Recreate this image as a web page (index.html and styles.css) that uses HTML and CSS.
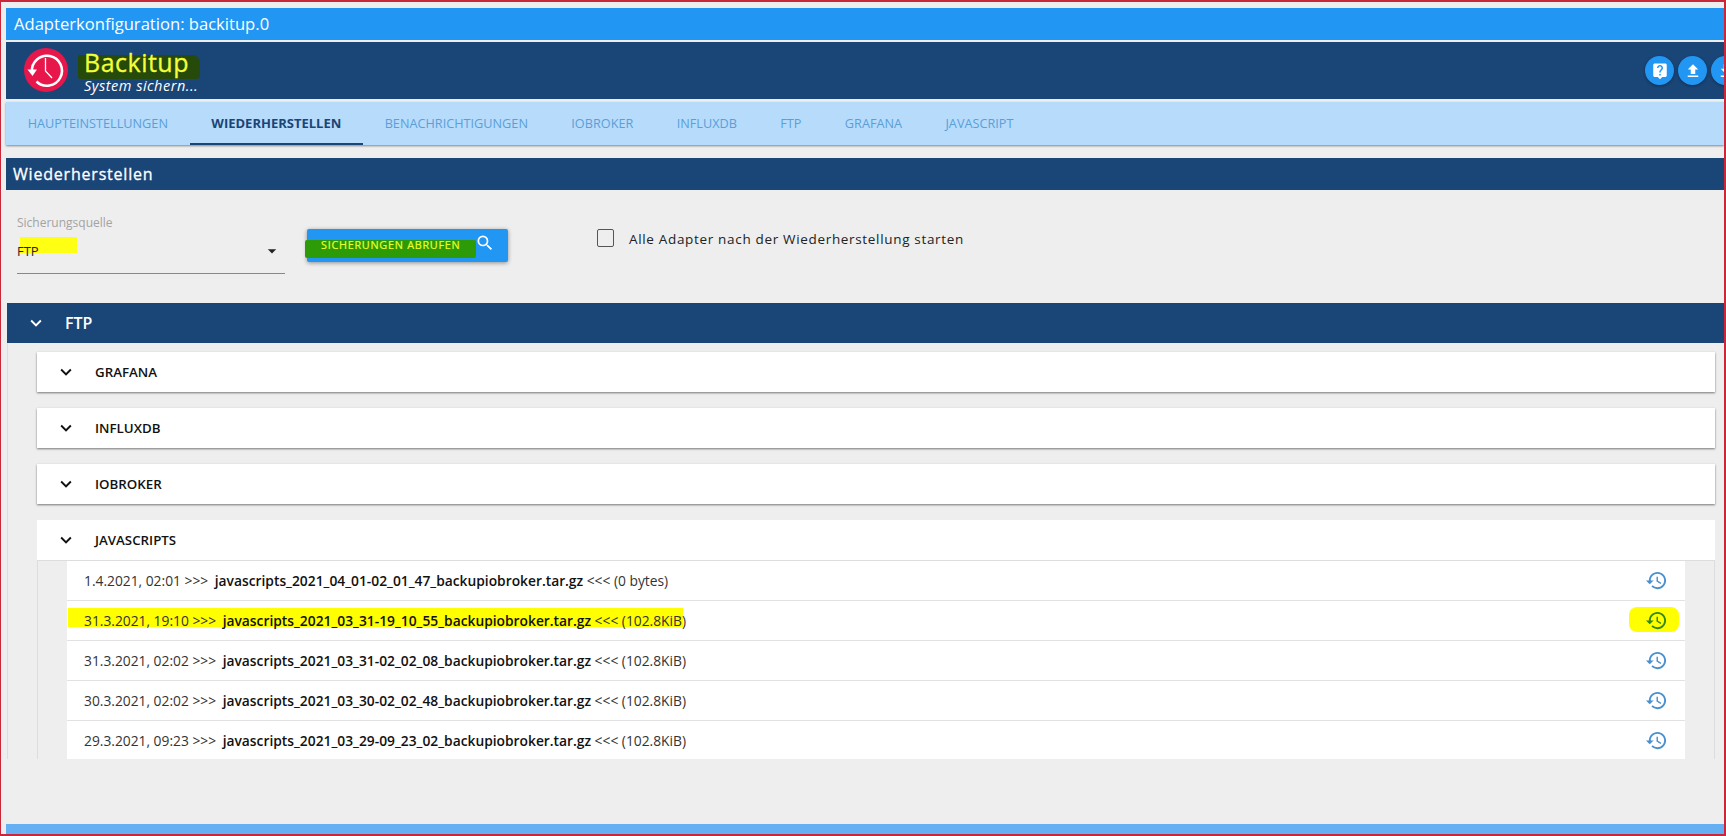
FILE: index.html
```html
<!DOCTYPE html>
<html lang="de">
<head>
<meta charset="utf-8">
<title>Adapterkonfiguration: backitup.0</title>
<link rel="stylesheet" href="styles.css">
</head>
<body>
<div class="frame">
  <div class="title-bar">Adapterkonfiguration: backitup.0</div>
  <header class="app-head">
    <svg class="logo" viewBox="0 0 44 44">
      <circle cx="22" cy="22" r="22" fill="#e8174b"/>
      <path d="M8 24A15 15 0 1 1 12.500 33.500" fill="none" stroke="#fff" stroke-width="2.600"/>
      <path d="M3.500 21.500h9.500L8.500 28z" fill="#fff"/>
      <path d="M21.500 10v13l6.500 7" fill="none" stroke="#fff" stroke-width="1.300"/>
    </svg>
    <div class="brand">
      <span class="mark mark-brand"></span>
      <div class="brand-name">Backitup</div>
      <div class="brand-sub">System sichern...</div>
    </div>
    <div class="head-actions">
      <span class="round-btn"><svg viewBox="0 0 24 24"><path d="M19 2H5c-1.110 0-2 .9-2 2v14c0 1.100.89 2 2 2h4l3 3 3-3h4c1.100 0 2-.9 2-2V4c0-1.100-.9-2-2-2zm-6 16h-2v-2h2v2zm2.070-7.750l-.9.92C13.450 11.900 13 12.500 13 14h-2v-.5c0-1.100.45-2.100 1.170-2.830l1.240-1.260c.37-.36.59-.86.59-1.410 0-1.100-.9-2-2-2s-2 .9-2 2H8c0-2.210 1.790-4 4-4s4 1.790 4 4c0 .88-.36 1.680-.93 2.250z"/></svg></span>
      <span class="round-btn"><svg viewBox="0 0 24 24"><path d="M9 16h6v-6h4l-7-7-7 7h4zm-4 2h14v2H5z"/></svg></span>
      <span class="round-btn"><svg viewBox="0 0 24 24"><path d="M19 9h-4V3H9v6H5l7 7 7-7zM5 18v2h14v-2H5z"/></svg></span>
    </div>
  </header>
  <nav class="tabs">
    <a class="tab">Haupteinstellungen</a>
    <a class="tab tab-active">Wiederherstellen</a>
    <a class="tab">Benachrichtigungen</a>
    <a class="tab">ioBroker</a>
    <a class="tab">InfluxDB</a>
    <a class="tab">FTP</a>
    <a class="tab">Grafana</a>
    <a class="tab">Javascript</a>
  </nav>
  <h2 class="section-bar">Wiederherstellen</h2>
  <div class="controls">
    <div class="select">
      <span class="mark mark-select"></span>
      <label class="select-label">Sicherungsquelle</label>
      <div class="select-value">FTP
        <svg class="caret" viewBox="0 0 24 24"><path d="M7 10l5 5 5-5z"/></svg>
      </div>
    </div>
    <button class="fetch-btn">
      <span class="mark mark-btn"></span>
      <span class="fetch-label">Sicherungen abrufen</span>
      <svg class="fetch-icon" viewBox="0 0 24 24"><path d="M15.500 14h-.79l-.28-.27A6.471 6.471 0 0 0 16 9.500 6.500 6.500 0 1 0 9.500 16c1.610 0 3.090-.59 4.230-1.570l.27.28v.79l5 4.990L20.490 19l-4.990-5zm-6 0C7.010 14 5 11.990 5 9.500S7.010 5 9.500 5 14 7.010 14 9.500 11.990 14 9.500 14z"/></svg>
    </button>
    <label class="check">
      <span class="check-box"></span>
      <span>Alle Adapter nach der Wiederherstellung starten</span>
    </label>
  </div>
  <section class="ftp">
    <div class="ftp-head">
      <svg class="chev" viewBox="0 0 24 24"><path d="M16.590 8.590L12 13.170 7.410 8.590 6 10l6 6 6-6z"/></svg>
      <span>FTP</span>
    </div>
    <div class="ftp-body">
      <div class="card"><div class="card-head"><svg class="chev" viewBox="0 0 24 24"><path d="M16.590 8.590L12 13.170 7.410 8.590 6 10l6 6 6-6z"/></svg><span>GRAFANA</span></div></div>
      <div class="card"><div class="card-head"><svg class="chev" viewBox="0 0 24 24"><path d="M16.590 8.590L12 13.170 7.410 8.590 6 10l6 6 6-6z"/></svg><span>INFLUXDB</span></div></div>
      <div class="card"><div class="card-head"><svg class="chev" viewBox="0 0 24 24"><path d="M16.590 8.590L12 13.170 7.410 8.590 6 10l6 6 6-6z"/></svg><span>IOBROKER</span></div></div>
      <div class="card card-open">
        <div class="card-head"><svg class="chev" viewBox="0 0 24 24"><path d="M16.590 8.590L12 13.170 7.410 8.590 6 10l6 6 6-6z"/></svg><span>JAVASCRIPTS</span></div>
        <ul class="files">
          <li class="file"><span>1.4.2021, 02:01 &gt;&gt;&gt; <b>javascripts_2021_04_01-02_01_47_backupiobroker.tar.gz</b> &lt;&lt;&lt; (0 bytes)</span>
            <svg class="restore" viewBox="0 0 24 24"><path d="M13 3c-4.970 0-9 4.030-9 9H1l3.890 3.890.07.14L9 12H6c0-3.870 3.130-7 7-7s7 3.130 7 7-3.130 7-7 7c-1.930 0-3.680-.79-4.940-2.060l-1.420 1.420C8.270 19.990 10.510 21 13 21c4.970 0 9-4.030 9-9s-4.030-9-9-9zm-1 5v5l4.280 2.540.72-1.210-3.500-2.080V8H12z"/></svg></li>
          <li class="file file-marked"><span class="mark mark-row"></span><span class="mark mark-icon"></span><span class="file-text">31.3.2021, 19:10 &gt;&gt;&gt; <b>javascripts_2021_03_31-19_10_55_backupiobroker.tar.gz</b> &lt;&lt;&lt; (102.8KiB)</span>
            <svg class="restore" viewBox="0 0 24 24"><path d="M13 3c-4.970 0-9 4.030-9 9H1l3.890 3.890.07.14L9 12H6c0-3.870 3.130-7 7-7s7 3.130 7 7-3.130 7-7 7c-1.930 0-3.680-.79-4.940-2.060l-1.420 1.420C8.270 19.990 10.510 21 13 21c4.970 0 9-4.030 9-9s-4.030-9-9-9zm-1 5v5l4.280 2.540.72-1.210-3.500-2.080V8H12z"/></svg></li>
          <li class="file"><span>31.3.2021, 02:02 &gt;&gt;&gt; <b>javascripts_2021_03_31-02_02_08_backupiobroker.tar.gz</b> &lt;&lt;&lt; (102.8KiB)</span>
            <svg class="restore" viewBox="0 0 24 24"><path d="M13 3c-4.970 0-9 4.030-9 9H1l3.890 3.890.07.14L9 12H6c0-3.870 3.130-7 7-7s7 3.130 7 7-3.130 7-7 7c-1.930 0-3.680-.79-4.940-2.060l-1.420 1.420C8.270 19.990 10.510 21 13 21c4.970 0 9-4.030 9-9s-4.030-9-9-9zm-1 5v5l4.280 2.540.72-1.210-3.500-2.080V8H12z"/></svg></li>
          <li class="file"><span>30.3.2021, 02:02 &gt;&gt;&gt; <b>javascripts_2021_03_30-02_02_48_backupiobroker.tar.gz</b> &lt;&lt;&lt; (102.8KiB)</span>
            <svg class="restore" viewBox="0 0 24 24"><path d="M13 3c-4.970 0-9 4.030-9 9H1l3.890 3.890.07.14L9 12H6c0-3.870 3.130-7 7-7s7 3.130 7 7-3.130 7-7 7c-1.930 0-3.680-.79-4.940-2.060l-1.420 1.420C8.270 19.990 10.510 21 13 21c4.970 0 9-4.030 9-9s-4.030-9-9-9zm-1 5v5l4.280 2.540.72-1.210-3.500-2.080V8H12z"/></svg></li>
          <li class="file"><span>29.3.2021, 09:23 &gt;&gt;&gt; <b>javascripts_2021_03_29-09_23_02_backupiobroker.tar.gz</b> &lt;&lt;&lt; (102.8KiB)</span>
            <svg class="restore" viewBox="0 0 24 24"><path d="M13 3c-4.970 0-9 4.030-9 9H1l3.890 3.890.07.14L9 12H6c0-3.870 3.130-7 7-7s7 3.130 7 7-3.130 7-7 7c-1.930 0-3.680-.79-4.940-2.060l-1.420 1.420C8.270 19.990 10.510 21 13 21c4.970 0 9-4.030 9-9s-4.030-9-9-9zm-1 5v5l4.280 2.540.72-1.210-3.500-2.080V8H12z"/></svg></li>
        </ul>
      </div>
    </div>
  </section>
  <div class="foot-bar"></div>
</div>
</body>
</html>
```
FILE: styles.css
```css
* { box-sizing: border-box; }
html, body { margin: 0; height: 100%; overflow: hidden; }
body { font-family: "Open Sans", "Liberation Sans", sans-serif; color: #111; background: #eee; }

.frame {
  height: 836px;
  border: 2px solid #c8283a;
  border-width: 2px 2px 2px 1px;
  background: #eee;
  padding: 6px 0 0 5px;
  display: flex;
  flex-direction: column;
  overflow: hidden;
}

.title-bar {
  height: 32px;
  flex: none;
  background: #2196f3;
  color: #fff;
  font-size: 16.600px;
  line-height: 32px;
  padding-left: 8px;
}

.app-head {
  position: relative;
  flex: none;
  height: 57px;
  margin-top: 2px;
  background: #1a4577;
  display: flex;
  align-items: center;
  padding-left: 18px;
}
.logo { width: 44px; height: 44px; flex: none; margin-top: -1px; }
.brand { position: relative; margin: -2px 0 0 16px; padding-top: 1px; }
.brand-name {
  position: relative;
  font-size: 25px;
  line-height: 30px;
  letter-spacing: .5px;
  color: #f2ff3c;
  -webkit-text-stroke: .3px #f2ff3c;
}
.brand-sub {
  position: relative;
  font-size: 14.500px;
  line-height: 17px;
  font-style: italic;
  color: #fff;
  letter-spacing: .5px;
}
.head-actions {
  position: absolute;
  left: 1639px;
  top: 14px;
  display: flex;
  gap: 4px;
}
.round-btn {
  flex: none;
  width: 29px;
  height: 29px;
  border-radius: 50%;
  background: #2196f3;
  box-shadow: 0 1px 3px rgba(0,0,0,.35);
  display: flex;
  align-items: center;
  justify-content: center;
}
.round-btn svg { width: 18px; height: 18px; fill: #fff; }

.mark { position: absolute; display: block; }
.mark-brand { left: -6px; top: 9px; width: 122px; height: 24px; background: #254a0a; border-radius: 2px 8px 4px 2px; }
.mark-select { left: 3px; top: 47px; width: 57px; height: 16px; background: #ffff14; }
.mark-btn { left: -2px; top: 11px; width: 171px; height: 18px; background: #2d9a08; border-radius: 2px; }
.mark-row { left: 1px; top: 7px; width: 615px; height: 19px; background: #ffff00; }
.mark-icon { left: 1562px; top: 6px; width: 50px; height: 25px; background: #ffff00; border-radius: 8px; }

.tabs {
  flex: none;
  height: 43px;
  margin-top: 3px;
  background: #b7dbfb;
  box-shadow: 0 1px 2px rgba(0,0,0,.45);
  display: flex;
}
.tab {
  height: 43px;
  padding: 0 21.700px;
  font-size: 12.700px;
  line-height: 43px;
  text-transform: uppercase;
  color: #5a9fd8;
  white-space: nowrap;
}
.tab-active {
  color: #1a4577;
  font-size: 13px;
  font-weight: 700;
  border-bottom: 2px solid #1a4577;
}

.section-bar {
  flex: none;
  margin: 13px 0 0;
  height: 32px;
  background: #1a4577;
  color: #fff;
  font-size: 16px;
  font-weight: 400;
  line-height: 32px;
  letter-spacing: .8px;
  padding-left: 7px;
  -webkit-text-stroke: .3px #fff;
}

.controls {
  flex: none;
  height: 113px;
  display: flex;
  align-items: flex-start;
  padding-left: 11px;
}
.select {
  position: relative;
  width: 268px;
  height: 84px;
  padding-top: 24px;
  border-bottom: 1px solid #888;
  flex: none;
}
.select-label { position: relative; display: block; font-size: 12px; line-height: 18px; color: #a3a3a3; }
.select-value { position: relative; margin-top: 10px; font-size: 13px; line-height: 18px; color: #222; }
.caret { position: absolute; right: 3px; top: -1px; width: 20px; height: 20px; fill: #222; }

.fetch-btn {
  position: relative;
  flex: none;
  margin: 39px 0 0 22px;
  width: 201px;
  height: 33px;
  border: 0;
  border-radius: 2px;
  background: #2196f3;
  box-shadow: 0 1px 4px rgba(0,0,0,.4);
  padding: 0 0 0 14px;
  display: flex;
  align-items: center;
  font-family: inherit;
}
.fetch-label {
  position: relative;
  font-size: 10.800px;
  line-height: 14px;
  letter-spacing: .75px;
  text-transform: uppercase;
  color: #eaff2a;
  -webkit-text-stroke: .2px #eaff2a;
  white-space: nowrap;
  margin-top: -2px;
}
.fetch-icon { position: absolute; left: 168px; top: 4px; width: 20px; height: 20px; fill: #fff; }

.check {
  flex: none;
  display: flex;
  align-items: center;
  gap: 15px;
  margin: 40px 0 0 89px;
  height: 18px;
  font-size: 13.500px;
  letter-spacing: .67px;
  color: #222;
}
.check-box {
  width: 17px;
  height: 18px;
  border: 1px solid #555;
  border-radius: 2px;
  flex: none;
  margin-top: -2px;
}

.ftp { flex: 1; min-height: 0; display: flex; flex-direction: column; }
.ftp-head {
  flex: none;
  height: 40px;
  margin-left: 1px;
  background: #1a4577;
  color: #fff;
  font-size: 16px;
  font-weight: 600;
  display: flex;
  align-items: center;
  gap: 18px;
  padding-left: 18px;
}
.ftp-head .chev { fill: #fff; }
.chev { width: 22px; height: 22px; flex: none; fill: #111; }
.ftp-body { padding: 9px 9px 0 29px; border-left: 1px solid #ddd; margin-left: 1px; }
.card {
  background: #fff;
  box-shadow: 0 1px 2px rgba(0,0,0,.5);
  margin-bottom: 16px;
}
.card-open { box-shadow: none; background: transparent; margin: 0; }
.card-head {
  height: 40px;
  display: flex;
  align-items: center;
  gap: 18px;
  padding-left: 18px;
  background: #fff;
  font-size: 13.300px;
  font-weight: 600;
}
.files {
  list-style: none;
  margin: 0;
  padding: 0 29px 0 29px;
  border-top: 1px solid #ddd;
  border-left: 1px solid #ddd;
  border-right: 1px solid #ddd;
}
.file {
  position: relative;
  height: 40px;
  background: #fff;
  border-bottom: 1px solid #e2e2e2;
  display: flex;
  align-items: center;
  justify-content: space-between;
  padding: 0 17px 0 17px;
  font-size: 13.800px;
  color: #333;
  white-space: nowrap;
}
.file:last-child { border-bottom: 0; height: 38px; }
.file b { color: #111; font-weight: 600; margin-left: 3px; }
.file-text { position: relative; }
.restore { position: relative; width: 23px; height: 23px; flex: none; fill: #4a90d0; }
.file-marked .restore { fill: #2f8a10; }

.foot-bar {
  flex: none;
  height: 10px;
  margin-top: auto;
  background: #64b0f2;
}
```
